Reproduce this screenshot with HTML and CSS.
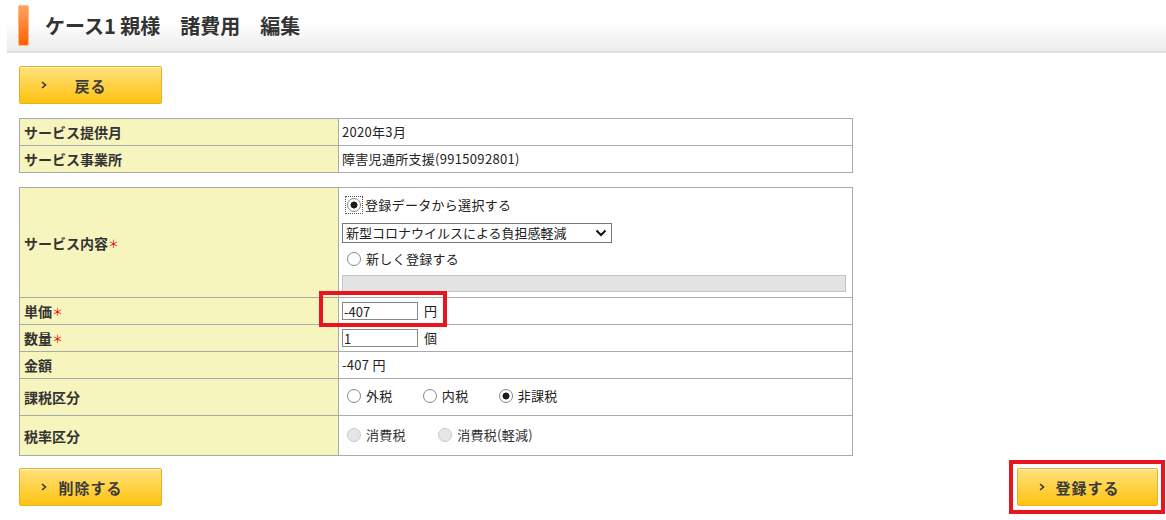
FILE: index.html
```html
<!DOCTYPE html>
<html lang="ja">
<head>
    <meta charset="UTF-8">
    <meta name="viewport" content="width=device-width, initial-scale=1.0">
    <title>諸費用 編集</title>
    <link rel="stylesheet" href="styles.css">
</head>
<body>
    <header class="page-head">
        <span class="head-mark"></span>
        <h1>ケース1 親様　諸費用　編集</h1>
    </header>

    <main class="content">
        <div class="top-bar">
            <button class="btn" type="button">
                <svg class="btn-arrow" width="6" height="8" viewBox="0 0 6 8"><path d="M1 1 L4.5 4 L1 7" fill="none" stroke="#333" stroke-width="1.6"/></svg>
                <span class="btn-label">戻る</span>
            </button>
        </div>

        <!-- Fixed info -->
        <table class="form-table">
            <colgroup><col class="col-label"><col></colgroup>
            <tr><th>サービス提供月</th><td>2020年3月</td></tr>
            <tr><th>サービス事業所</th><td>障害児通所支援(9915092801)</td></tr>
        </table>

        <!-- Editable fields -->
        <table class="form-table">
            <colgroup><col class="col-label"><col></colgroup>
            <tr class="row-service">
                <th>サービス内容<span class="req">＊</span></th>
                <td>
                    <label class="opt opt-first"><span class="focus-ring"><input class="radio" type="radio" name="svc" checked></span>登録データから選択する</label>
                    <span class="select-wrap">
                        <select class="svc-select">
                            <option>新型コロナウイルスによる負担感軽減</option>
                        </select>
                        <svg class="select-caret" width="12" height="8" viewBox="0 0 12 8"><path d="M1.5 1.5 L6 6 L10.5 1.5" fill="none" stroke="#111" stroke-width="2"/></svg>
                    </span>
                    <label class="opt opt-second"><input class="radio" type="radio" name="svc">新しく登録する</label>
                    <input class="svc-new" type="text" disabled>
                </td>
            </tr>
            <tr>
                <th>単価<span class="req">＊</span></th>
                <td>
                    <span class="mark-wrap"><input class="num" type="text" value="-407"><span class="mark-box"></span></span><span class="unit">円</span>
                </td>
            </tr>
            <tr>
                <th>数量<span class="req">＊</span></th>
                <td><input class="num" type="text" value="1"><span class="unit">個</span></td>
            </tr>
            <tr>
                <th>金額</th>
                <td>-407 円</td>
            </tr>
            <tr class="row-tax">
                <th>課税区分</th>
                <td>
                    <label class="opt-inline"><input class="radio" type="radio" name="tax">外税</label>
                    <label class="opt-inline"><input class="radio" type="radio" name="tax">内税</label>
                    <label class="opt-inline"><input class="radio" type="radio" name="tax" checked>非課税</label>
                </td>
            </tr>
            <tr class="row-rate">
                <th>税率区分</th>
                <td>
                    <label class="opt-inline off"><input class="radio" type="radio" name="rate" disabled>消費税</label>
                    <label class="opt-inline off"><input class="radio" type="radio" name="rate" disabled>消費税(軽減)</label>
                </td>
            </tr>
        </table>

        <div class="bottom-bar">
            <button class="btn" type="button">
                <svg class="btn-arrow" width="6" height="8" viewBox="0 0 6 8"><path d="M1 1 L4.5 4 L1 7" fill="none" stroke="#333" stroke-width="1.6"/></svg>
                <span class="btn-label">削除する</span>
            </button>
            <span class="submit-box">
                <button class="btn" type="button">
                    <svg class="btn-arrow" width="6" height="8" viewBox="0 0 6 8"><path d="M1 1 L4.5 4 L1 7" fill="none" stroke="#333" stroke-width="1.6"/></svg>
                    <span class="btn-label">登録する</span>
                </button>
            </span>
        </div>
    </main>
</body>
</html>
```

FILE: styles.css
```css
/* Global */
body {
    margin: 0;
    padding: 0;
    background: #fff;
    color: #222;
    font-family: "Noto Sans CJK JP", "Noto Sans", sans-serif;
    font-size: 13px;
}

/* Page heading */
.page-head {
    display: flex;
    align-items: center;
    height: 51px;
    margin-left: 7px;
    background: linear-gradient(#fff 45%, #ebebeb 100%);
    border-bottom: 2px solid #e0e0e0;
}

.head-mark {
    width: 9px;
    height: 39px;
    margin-left: 11px;
    border: 1px solid #ffb886;
    border-radius: 2px;
    background: linear-gradient(#ffa25e, #ff6200);
}

.page-head h1 {
    margin: 0 0 0 16px;
    font-size: 20px;
    font-weight: bold;
    color: #333;
    line-height: 1;
}

/* Content */
.content {
    padding: 0 1px 0 19px;
}

.top-bar {
    margin-top: 13px;
}

/* Yellow buttons */
.btn {
    display: flex;
    align-items: center;
    width: 143px;
    height: 38px;
    padding: 0 0 0 21px;
    border: 1px solid #e2b22a;
    border-radius: 2px;
    background: linear-gradient(#ffe27d, #ffc20f);
    box-shadow: inset 0 1px 0 rgba(255, 255, 255, 0.5);
    font-family: inherit;
    font-size: 15px;
    font-weight: bold;
    color: #3a3a3a;
    cursor: pointer;
}

.btn-arrow {
    flex: none;
}

.btn-label {
    flex: 1;
    text-align: center;
    margin-right: 27px;
    letter-spacing: 1px;
}

/* Tables */
.form-table {
    width: 834px;
    margin-top: 14px;
    border-collapse: collapse;
    table-layout: fixed;
    border: 1px solid #999;
}

.col-label {
    width: 319px;
}

.form-table th,
.form-table td {
    height: 26px;
    padding: 0 3px;
    border: 1px solid #aaa;
    text-align: left;
    vertical-align: middle;
    line-height: 16px;
}

.form-table th {
    padding-left: 4px;
    background: #f7f5be;
    font-size: 14px;
    font-weight: bold;
    color: #333;
}

.form-table td {
    color: #222;
    letter-spacing: 0.3px;
}

.req {
    color: #e00;
    font-size: 11px;
    font-weight: normal;
    vertical-align: 1px;
}

/* Service row */
.row-service td {
    height: 101px;
    padding-top: 3px;
    padding-bottom: 5px;
    vertical-align: top;
}

.opt {
    display: flex;
    align-items: center;
    height: 26px;
}

.opt-first {
    margin-top: 1px;
}

.opt-second {
    margin-top: 3px;
}

.focus-ring {
    display: inline-flex;
    padding: 1px;
    margin: 0 3px 0 4px;
    outline: 1px dotted #555;
}

.focus-ring .radio {
    margin: 0;
}

.select-wrap {
    position: relative;
    display: block;
    width: 270px;
    margin-top: 5px;
}

.svc-select {
    appearance: none;
    display: block;
    box-sizing: border-box;
    width: 270px;
    height: 20px;
    padding: 0 20px 0 3px;
    border: 1px solid #777;
    border-radius: 0;
    background: #fff;
    font-family: inherit;
    font-size: 13px;
    line-height: 18px;
    color: #222;
}

.select-caret {
    position: absolute;
    right: 5px;
    top: 6px;
    pointer-events: none;
}

.svc-new {
    display: block;
    box-sizing: border-box;
    width: 504px;
    height: 17px;
    margin-top: 3px;
    border: 1px solid #c4c4c4;
    background: #e3e3e3;
}

/* Radios */
.radio {
    appearance: none;
    flex: none;
    width: 14px;
    height: 14px;
    margin: 0 5px 0 5px;
    border: 1px solid #888;
    border-radius: 50%;
    background: #fff;
    vertical-align: middle;
}

.radio:checked {
    background: radial-gradient(circle, #1b1b1b 0 3.2px, #fff 3.8px);
}

.radio:disabled {
    border-color: #c8c8c8;
    background: #e6e6e6;
}

.opt-inline {
    display: inline-flex;
    align-items: center;
    margin-right: 22px;
}

.opt-inline.off {
    color: #333;
    margin-right: 24px;
}

/* Amount inputs */
.num {
    box-sizing: border-box;
    width: 76px;
    height: 18px;
    padding: 0 1px;
    border: 1px solid #888;
    font-family: inherit;
    font-size: 13px;
    color: #222;
    vertical-align: middle;
}

.unit {
    margin-left: 6px;
    vertical-align: middle;
}

.mark-wrap {
    position: relative;
    display: inline-block;
    vertical-align: middle;
}

.mark-wrap .num {
    display: block;
}

.mark-box {
    position: absolute;
    left: -23px;
    top: -11px;
    width: 128px;
    height: 36px;
    box-sizing: border-box;
    border: 4px solid #e8151e;
}

.row-tax td {
    height: 36px;
}

.row-rate td {
    height: 39px;
}

/* Bottom buttons */
.bottom-bar {
    display: flex;
    justify-content: space-between;
    align-items: center;
    margin-top: 4px;
}

.submit-box {
    display: block;
    padding: 4px 3px 4px 4px;
    border: 4px solid #e8151e;
}

.submit-box .btn {
    width: 141px;
}
```
